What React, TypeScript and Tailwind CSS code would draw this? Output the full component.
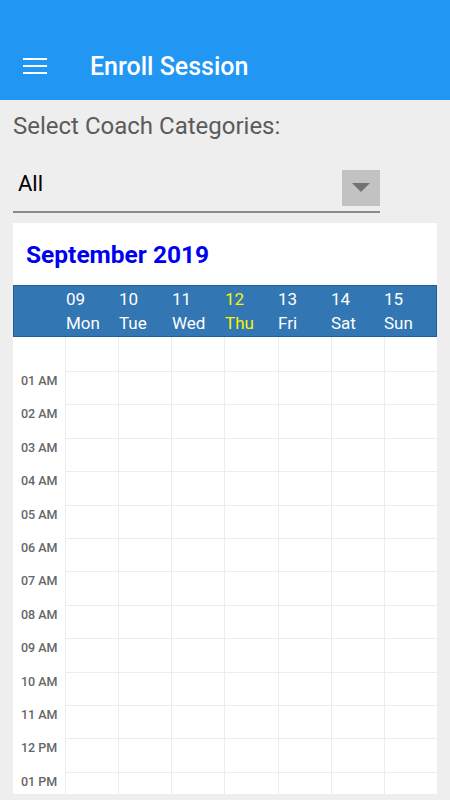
import React from "react";

const days = [
  { date: "09", name: "Mon" },
  { date: "10", name: "Tue" },
  { date: "11", name: "Wed" },
  { date: "12", name: "Thu", today: true },
  { date: "13", name: "Fri" },
  { date: "14", name: "Sat" },
  { date: "15", name: "Sun" },
];

const hours = [
  "",
  "01 AM",
  "02 AM",
  "03 AM",
  "04 AM",
  "05 AM",
  "06 AM",
  "07 AM",
  "08 AM",
  "09 AM",
  "10 AM",
  "11 AM",
  "12 PM",
  "01 PM",
];

export default function App() {
  return (
    <div className="h-[800px] w-[450px] overflow-hidden bg-[#eeeeee] font-['Roboto',sans-serif]">
      {/* Toolbar */}
      <header className="flex h-[100px] items-center bg-[#2196f3] pt-[32px]">
        <button className="ml-[23px] flex h-[24px] w-[24px] flex-col justify-center gap-[4.5px]">
          <span className="block h-[2.5px] w-[24px] bg-white" />
          <span className="block h-[2.5px] w-[24px] bg-white" />
          <span className="block h-[2.5px] w-[24px] bg-white" />
        </button>
        <h1 className="ml-[43px] mt-[2px] text-[25px] font-medium leading-[30px] text-white">
          Enroll Session
        </h1>
      </header>

      {/* Category picker */}
      <div className="px-[13px]">
        <p className="pt-[10px] text-[24px] leading-[32px] text-[#5b5b5b]">
          Select Coach Categories:
        </p>
        <div className="mt-[28px] flex h-[43px] w-[367px] items-start justify-between border-b-[2px] border-[#8a8a8a]">
          <span className="pl-[5px] pt-[1px] text-[22px] leading-[26px] text-black">All</span>
          <div className="flex h-[36px] w-[38px] items-center justify-center bg-[#c2c2c2]">
            <svg width="18" height="10" viewBox="0 0 18 10">
              <path d="M0 0h18L9 9z" fill="#727272" />
            </svg>
          </div>
        </div>
      </div>

      {/* Calendar card */}
      <div className="mx-[13px] mt-[10px] h-[571px] overflow-hidden bg-white">
        <div className="flex h-[62px] items-center pl-[13px] pt-[2px]">
          <h2 className="text-[24.5px] font-bold text-[#0000f0]">September 2019</h2>
        </div>

        <div className="flex h-[52px] border border-[#1f5e9e] bg-[#3276b3]">
          <div className="w-[51px] shrink-0" />
          {days.map((d) => (
            <div
              key={d.date}
              className={`flex-1 pl-[1px] pt-[1px] text-[17px] leading-[24px] ${
                d.today ? "text-[#f5f500]" : "text-white"
              }`}
            >
              <div>{d.date}</div>
              <div>{d.name}</div>
            </div>
          ))}
        </div>

        <div>
          {hours.map((h, i) => (
            <div key={i} className={`flex ${i === 0 ? "h-[34px]" : "h-[33.4px]"}`}>
              <div className="w-[52px] shrink-0 pl-[8px] pt-[2px] text-[12.5px] font-medium leading-[16px] text-[#666666]">
                {h}
              </div>
              {days.map((d) => (
                <div
                  key={d.date}
                  className={`flex-1 border-l border-[#ececec] ${i === 0 ? "" : "border-t"}`}
                />
              ))}
            </div>
          ))}
        </div>
      </div>
    </div>
  );
}
